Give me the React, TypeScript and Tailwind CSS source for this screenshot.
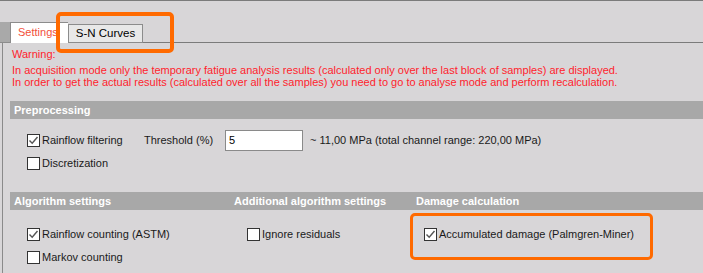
import React from 'react';

function Check({ checked }: { checked?: boolean }) {
  return (
    <span className="w-[13px] h-[13px] shrink-0 border border-[#333333] bg-white flex items-center justify-center">
      {checked && (
        <svg width="11" height="11" viewBox="0 0 11 11">
          <path d="M1.5 5.5 L4.2 8.3 L9.5 2" fill="none" stroke="#555555" strokeWidth="1.4" />
        </svg>
      )}
    </span>
  );
}

function CheckRow({ label, checked }: { label: string; checked?: boolean }) {
  return (
    <label className="flex items-center gap-[2px] h-[13px]">
      <Check checked={checked} />
      <span>{label}</span>
    </label>
  );
}

export default function App() {
  return (
    <div
      className="relative w-[703px] h-[273px] overflow-hidden bg-[#d8d6d8] text-[11px] text-[#1a1a1a] flex flex-col"
      style={{ fontFamily: '"Liberation Sans", Arial, sans-serif' }}
    >
      <div className="h-px bg-[#7b7b7b]" />

      {/* Tab strip */}
      <div className="h-[42px] flex items-end">
        <div className="w-[10px] h-[21px] bg-[#a9a9a9] border-b border-[#8c8c8c]" />
        <div className="w-[58px] h-[21px] bg-white border-l border-t border-[#8c8c8c] flex items-center pl-[7px] pb-[1px] text-[11px] text-[#f2503a]">
          Settings
        </div>
        <div className="w-[75px] h-[19px] bg-[#e8e8e8] border border-[#8c8c8c] flex items-center justify-center text-[11.5px] text-black">
          S-N Curves
        </div>
        <div className="flex-1 border-b border-[#7b7b7b]" />
      </div>

      <div className="flex-1 flex">
        <div className="w-[10px] shrink-0">
          <div className="ml-[2px] w-px h-full bg-[#8a8a8a]" />
        </div>

        <div className="flex-1 flex flex-col">
          {/* Warning */}
          <div className="pl-[2px] pt-[5px] text-[#ff1e2d] leading-[13px]">
            <div>Warning:</div>
            <div className="mt-[3px] leading-[12px]">
              In acquisition mode only the temporary fatigue analysis results (calculated only over the last block of samples) are displayed.
            </div>
            <div className="leading-[12px]">
              In order to get the actual results (calculated over all the samples) you need to go to analyse mode and perform recalculation.
            </div>
          </div>

          {/* Preprocessing */}
          <div className="mt-[13px] h-[18px] bg-[#a8a8a8] flex items-center pl-[4px] text-white font-bold">
            Preprocessing
          </div>
          <div className="flex items-start pl-[17px] pt-[11px]">
            <div className="flex flex-col gap-[6px] w-[117px]">
              <div className="h-[21px] flex items-center">
                <CheckRow label="Rainflow filtering" checked />
              </div>
              <CheckRow label="Discretization" />
            </div>
            <div className="h-[21px] flex items-center w-[81px]">Threshold (%)</div>
            <div className="w-[78px] h-[21px] bg-white border border-[#8a8a8a] flex items-center pl-[3px] text-black">5</div>
            <div className="h-[21px] flex items-center pl-[7px]">
              ~ 11,00 MPa (total channel range: 220,00 MPa)
            </div>
          </div>

          {/* Algorithm settings */}
          <div className="mt-[22px] h-[18px] bg-[#a8a8a8] flex items-center text-white font-bold">
            <div className="w-[220px] pl-[4px]">Algorithm settings</div>
            <div className="w-[182px] pl-[4px]">Additional algorithm settings</div>
            <div className="pl-[4px]">Damage calculation</div>
          </div>
          <div className="flex pt-[18px]">
            <div className="w-[220px] pl-[17px] flex flex-col gap-[10px]">
              <CheckRow label="Rainflow counting (ASTM)" checked />
              <CheckRow label="Markov counting" />
            </div>
            <div className="w-[182px] pl-[17px]">
              <CheckRow label="Ignore residuals" />
            </div>
            <div className="pl-[12px]">
              <CheckRow label="Accumulated damage (Palmgren-Miner)" checked />
            </div>
          </div>
        </div>
      </div>

      {/* Highlight overlays */}
      <div className="absolute left-[56px] top-[12px] w-[118px] h-[41px] border-[4px] border-[#ff6a00] rounded-[5px]" />
      <div className="absolute left-[410px] top-[213px] w-[243px] h-[47px] border-[3px] border-[#ff6a00] rounded-[5px]" />
    </div>
  );
}
